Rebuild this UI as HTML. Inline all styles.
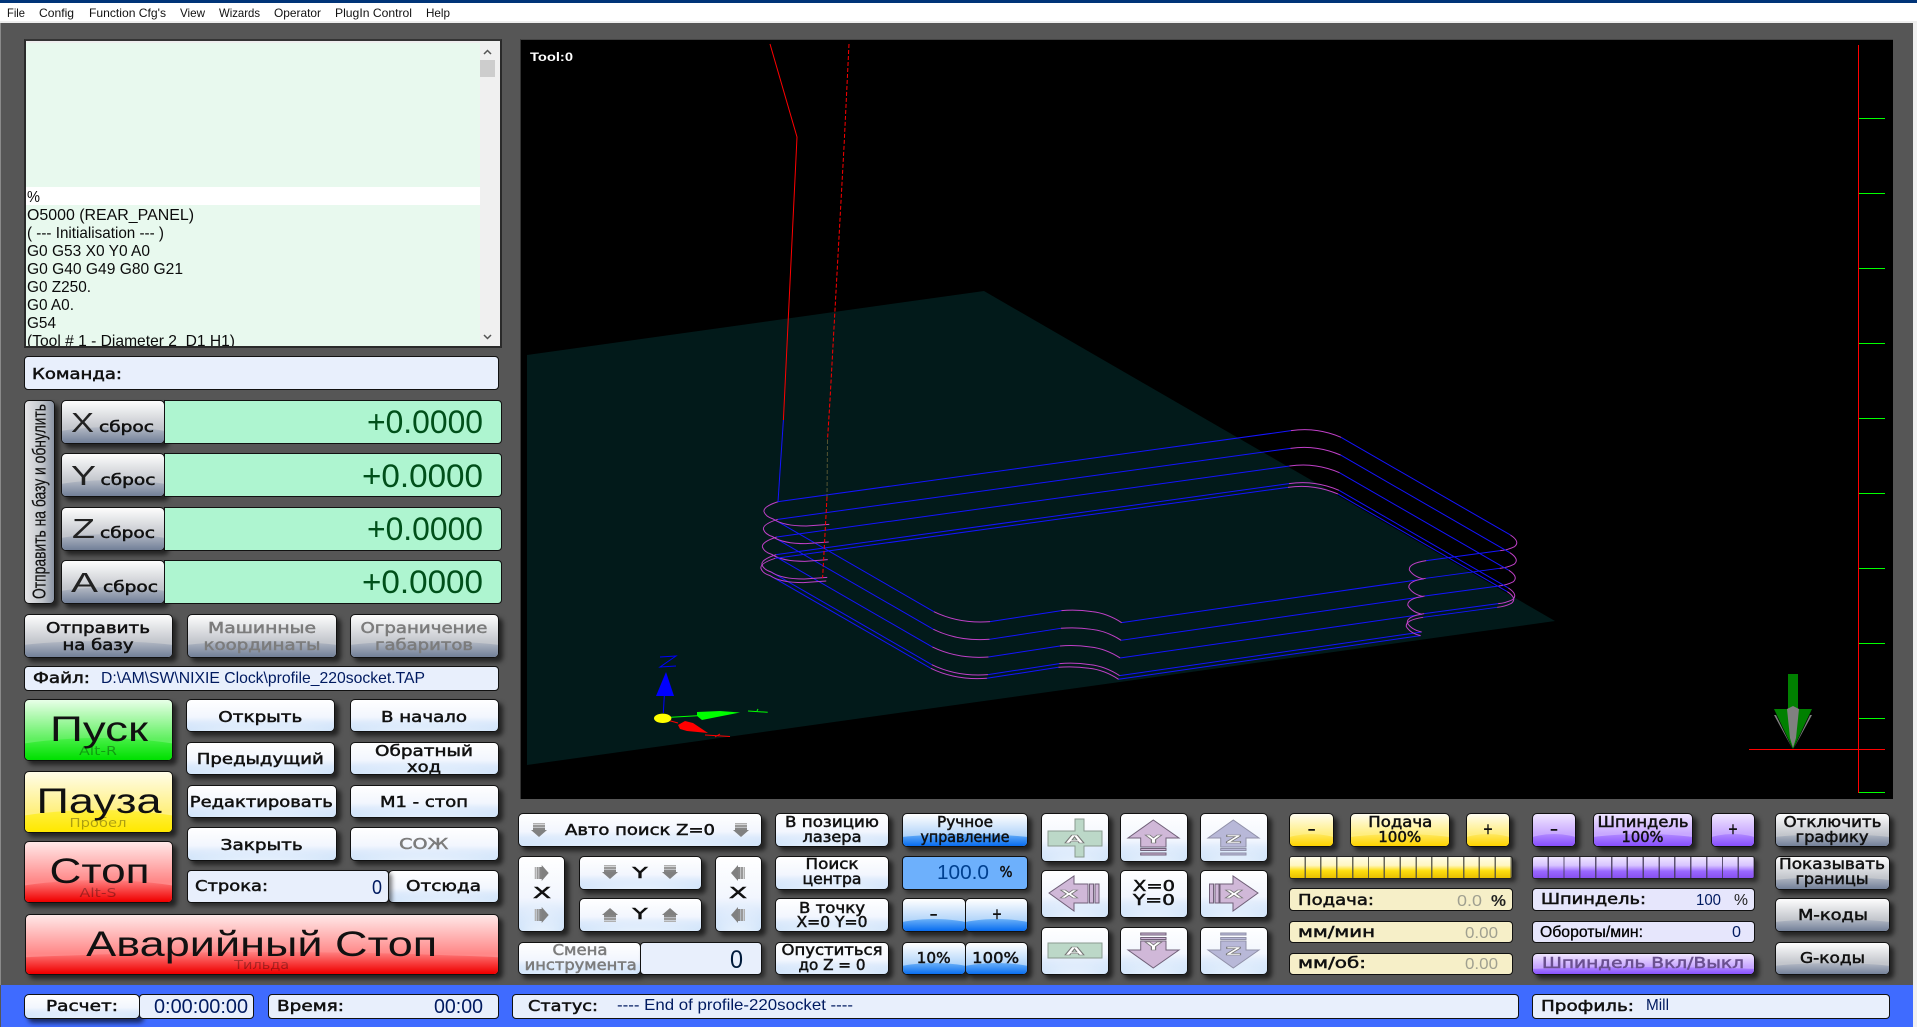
<!DOCTYPE html>
<html lang="ru"><head><meta charset="utf-8"><title>Mach3</title>
<style>
html,body{margin:0;padding:0;width:1917px;height:1027px;overflow:hidden;background:#565656}
div{position:absolute;box-sizing:border-box}
.b{border:1px solid #111;border-radius:5px;overflow:hidden;box-shadow:4px 4px 5px rgba(0,0,0,.6)}
.b::before{content:"";position:absolute;left:-45%;right:-45%;top:63%;height:120%;border-radius:50%;background:var(--h)}
.g{background:linear-gradient(#fdfdfd 0,#c4c7cd 63%,#b8bcc4);--h:linear-gradient(#b4bac5,#75829a 30%)}
.w{background:linear-gradient(#fff 0,#f2f6fe 55%,#bcd8f8);--h:radial-gradient(closest-side,#fff 0,rgba(255,255,255,0) 100%)}
.l{background:linear-gradient(#fff,#b8d8fa 62%,#7fbdf8);--h:linear-gradient(#6ab0f8,#0a6ef0 30%)}
.y{background:linear-gradient(#fffdf0,#ffee80 62%);--h:linear-gradient(#ffe860,#ffd400 30%)}
.p{background:linear-gradient(#f0e6ff,#c8a8ff 62%);--h:linear-gradient(#b088ff,#8850ff 30%)}
.gr{background:linear-gradient(#e8ffe8,#60f060 65%);--h:linear-gradient(#48f048,#00e000 30%)}
.ye{background:linear-gradient(#fffde8,#fff080 65%);--h:linear-gradient(#fff040,#ffe800 30%)}
.re{background:linear-gradient(#ffe8e8,#ff8888 65%);--h:linear-gradient(#ff8080,#f00000 30%)}
.vb{background:linear-gradient(90deg,#e6e6e8,#c0c4ca 60%,#8a94a4);--h:none}
.f{border:1px solid #111;border-radius:4px;background:#e8effc}
.bar{border:1px solid #222;border-radius:3px;box-shadow:3px 3px 4px rgba(0,0,0,.5)}
svg text{white-space:pre}
.e{font:400 15px "DejaVu Sans",sans-serif;fill:#111;stroke:#111;stroke-width:.5}
.d{fill:#7c7c7c;stroke:#7c7c7c}
.m{text-anchor:middle}
.t{font:16px "Liberation Sans",sans-serif;fill:#001a60}
.c{font:16px "Liberation Sans",sans-serif;fill:#0b0b0b}
.n{font:12px "Liberation Sans",sans-serif;fill:#111}
.v{font:20px "Liberation Sans",sans-serif;fill:#001a60}
.h{font:32px "Liberation Sans",sans-serif;fill:#00501a}
.big{font:35px "Liberation Sans",sans-serif;fill:#111}
.th{font:28px "Liberation Sans",sans-serif;fill:#222}
.s{font:400 12px "DejaVu Sans",sans-serif;fill:#000;opacity:.32}
.j{font:700 11px "DejaVu Sans",sans-serif;fill:#fff;stroke:#777;stroke-width:.6;text-anchor:middle}
</style></head><body>
<div style="left:0;top:0;width:1917px;height:3px;background:#003478"></div>
<div style="left:0;top:3px;width:1917px;height:20px;background:#fff;border-bottom:2px solid #eee"></div>
<div style="left:0;top:23px;width:1px;height:962px;background:#8a8a8a"></div>
<div style="left:1913px;top:23px;width:4px;height:1004px;background:#f0f0f0"></div>
<div style="left:1px;top:985px;width:1912px;height:42px;background:#3f6bff"></div>

<div style="left:24px;top:39px;width:478px;height:309px;background:#e8f9ee;border:2px solid #2a2a2a;border-top:2px solid #333"></div>
<div style="left:26px;top:41px;width:454px;height:2px;background:#eee"></div>
<div style="left:26px;top:187px;width:454px;height:18px;background:#fff"></div>
<div style="left:480px;top:41px;width:20px;height:305px;background:#f0f0f0"></div>
<div style="left:480px;top:60px;width:15px;height:17px;background:#cdcdcd"></div>
<div class="f" style="left:24px;top:356px;width:475px;height:34px"></div>

<div class="b vb" style="left:24px;top:400px;width:31px;height:204px"></div>
<div class="b g" style="left:61px;top:400px;width:104px;height:44px"></div>
<div class="b g" style="left:61px;top:453px;width:104px;height:44px"></div>
<div class="b g" style="left:61px;top:507px;width:104px;height:44px"></div>
<div class="b g" style="left:61px;top:560px;width:104px;height:44px"></div>
<div class="f" style="left:164px;top:400px;width:338px;height:44px;background:#aef5d0;border-radius:0 4px 4px 0"></div>
<div class="f" style="left:164px;top:453px;width:338px;height:44px;background:#aef5d0;border-radius:0 4px 4px 0"></div>
<div class="f" style="left:164px;top:507px;width:338px;height:44px;background:#aef5d0;border-radius:0 4px 4px 0"></div>
<div class="f" style="left:164px;top:560px;width:338px;height:44px;background:#aef5d0;border-radius:0 4px 4px 0"></div>

<div class="b g" style="left:24px;top:614px;width:149px;height:44px"></div>
<div class="b g" style="left:187px;top:614px;width:150px;height:44px"></div>
<div class="b g" style="left:350px;top:614px;width:149px;height:44px"></div>
<div class="f" style="left:24px;top:666px;width:475px;height:25px"></div>

<div class="b gr" style="left:24px;top:699px;width:149px;height:62px"></div>
<div class="b ye" style="left:24px;top:771px;width:149px;height:62px"></div>
<div class="b re" style="left:24px;top:841px;width:149px;height:62px"></div>
<div class="b re" style="left:25px;top:914px;width:474px;height:61px"></div>

<div class="b w" style="left:186px;top:699px;width:149px;height:33px"></div>
<div class="b w" style="left:350px;top:699px;width:149px;height:33px"></div>
<div class="b w" style="left:186px;top:742px;width:149px;height:33px"></div>
<div class="b w" style="left:350px;top:742px;width:149px;height:33px"></div>
<div class="b w" style="left:187px;top:785px;width:150px;height:33px"></div>
<div class="b w" style="left:350px;top:785px;width:149px;height:33px"></div>
<div class="b w" style="left:187px;top:827px;width:150px;height:34px"></div>
<div class="b w" style="left:350px;top:827px;width:149px;height:34px"></div>
<div class="b w" style="left:388px;top:870px;width:111px;height:33px"></div>
<div class="f" style="left:187px;top:870px;width:202px;height:33px;box-shadow:3px 3px 4px rgba(0,0,0,.5)"></div>

<div class="b w" style="left:24px;top:994px;width:116px;height:25px"></div>
<div class="f" style="left:139px;top:994px;width:115px;height:25px"></div>
<div class="f" style="left:268px;top:994px;width:231px;height:25px"></div>
<div class="f" style="left:512px;top:994px;width:1007px;height:25px"></div>
<div class="f" style="left:1532px;top:994px;width:358px;height:25px"></div>

<div style="left:520px;top:39px;width:1373px;height:760px;background:#000;border-left:1px solid #333;border-top:1px solid #444"></div>

<div class="b w" style="left:518px;top:813px;width:244px;height:34px"></div>
<div class="b w" style="left:518px;top:856px;width:47px;height:76px"></div>
<div class="b w" style="left:579px;top:856px;width:123px;height:34px"></div>
<div class="b w" style="left:579px;top:898px;width:123px;height:34px"></div>
<div class="b w" style="left:715px;top:856px;width:47px;height:76px"></div>
<div class="b w" style="left:518px;top:942px;width:123px;height:33px"></div>
<div class="f" style="left:640px;top:942px;width:122px;height:33px;box-shadow:3px 3px 4px rgba(0,0,0,.5)"></div>
<div class="b w" style="left:775px;top:813px;width:114px;height:34px"></div>
<div class="b w" style="left:775px;top:856px;width:114px;height:34px"></div>
<div class="b w" style="left:775px;top:898px;width:114px;height:34px"></div>
<div class="b w" style="left:775px;top:942px;width:114px;height:33px"></div>
<div class="b l" style="left:902px;top:813px;width:126px;height:34px"></div>
<div class="f" style="left:902px;top:856px;width:126px;height:34px;background:#6db0fc;box-shadow:3px 3px 4px rgba(0,0,0,.5)"></div>
<div class="b l" style="left:902px;top:898px;width:64px;height:34px"></div>
<div class="b l" style="left:965px;top:898px;width:63px;height:34px"></div>
<div class="b l" style="left:902px;top:942px;width:64px;height:33px"></div>
<div class="b l" style="left:965px;top:942px;width:63px;height:33px"></div>

<div class="b w" style="left:1041px;top:813px;width:68px;height:49px"></div>
<div class="b w" style="left:1120px;top:813px;width:68px;height:49px"></div>
<div class="b w" style="left:1200px;top:813px;width:68px;height:49px"></div>
<div class="b w" style="left:1041px;top:870px;width:68px;height:48px"></div>
<div class="b w" style="left:1120px;top:870px;width:68px;height:48px"></div>
<div class="b w" style="left:1200px;top:870px;width:68px;height:48px"></div>
<div class="b w" style="left:1041px;top:927px;width:68px;height:48px"></div>
<div class="b w" style="left:1120px;top:927px;width:68px;height:48px"></div>
<div class="b w" style="left:1200px;top:927px;width:68px;height:48px"></div>

<div class="b y" style="left:1289px;top:813px;width:45px;height:34px"></div>
<div class="b y" style="left:1350px;top:813px;width:100px;height:34px"></div>
<div class="b y" style="left:1466px;top:813px;width:44px;height:34px"></div>
<div class="bar" style="left:1289px;top:856px;width:224px;height:23px;background:repeating-linear-gradient(90deg,rgba(0,0,0,0) 0 14.4px,rgba(80,80,70,.85) 14.4px 15.85px),linear-gradient(#fffde8,#fff6c0 40%,#ffdf10 65%,#e8c000)"></div>
<div class="f" style="left:1289px;top:888px;width:224px;height:23px;background:#f6efc8"></div>
<div class="f" style="left:1289px;top:921px;width:224px;height:22px;background:#f6efc8"></div>
<div class="f" style="left:1289px;top:953px;width:224px;height:22px;background:#f6efc8"></div>

<div class="b p" style="left:1532px;top:813px;width:44px;height:34px"></div>
<div class="b p" style="left:1593px;top:813px;width:100px;height:34px"></div>
<div class="b p" style="left:1711px;top:813px;width:44px;height:34px"></div>
<div class="bar" style="left:1532px;top:856px;width:223px;height:23px;background:repeating-linear-gradient(90deg,rgba(0,0,0,0) 0 14.4px,rgba(70,60,90,.85) 14.4px 15.85px),linear-gradient(#efe6ff,#d8c4ff 40%,#9a68ff 68%,#8850f0)"></div>
<div class="f" style="left:1532px;top:888px;width:223px;height:23px;background:#e6e6fc"></div>
<div class="f" style="left:1532px;top:921px;width:223px;height:22px;background:#e6e6fc"></div>
<div class="b p" style="left:1532px;top:953px;width:223px;height:22px"></div>

<div class="b g" style="left:1775px;top:813px;width:115px;height:34px"></div>
<div class="b g" style="left:1775px;top:856px;width:115px;height:34px"></div>
<div class="b g" style="left:1775px;top:898px;width:115px;height:34px"></div>
<div class="b g" style="left:1775px;top:942px;width:115px;height:33px"></div>

<svg width="1917" height="1027" viewBox="0 0 1917 1027" style="position:absolute;left:0;top:0">
<defs>
<clipPath id="cg"><rect x="26" y="41" width="454" height="305"/></clipPath>
<clipPath id="cv"><rect x="521" y="40" width="1372" height="759"/></clipPath>
<g id="lay" fill="none" stroke-width="1">
<path stroke="#1414ff" vector-effect="non-scaling-stroke" d="M75,305L1080,92M1178,112L1510,405M1490,452L1345,482M1340,537L748,668M630,632L490,665M380,635L65,357"/>
<path stroke="#c040c8" vector-effect="non-scaling-stroke" d="M1080,92Q1108,86 1132,92Q1155,97 1178,112M1510,405Q1530,425 1518,440Q1505,450 1490,452M1345,482Q1310,490 1312,510Q1320,530 1340,537M748,668Q720,640 690,635Q660,628 630,632M490,665Q430,672 380,635M75,305Q45,320 47,335Q50,350 65,357Q85,378 130,378L175,373"/>
</g>
<g id="ad"><rect x="-6" y="-7" width="12" height="1.5" fill="#b0b0b0"/><rect x="-6" y="-5" width="12" height="2" fill="#999"/><rect x="-6" y="-2.500" width="12" height="3" fill="#858585"/><polygon points="-8,0 8,0 0,7" fill="#808080"/></g>
</defs>

<!-- 3D view -->
<g clip-path="url(#cv)">
<polygon points="527,355 984,291 1555,621 527,765" fill="#021a1a"/>
<g shape-rendering="crispEdges">
<line x1="1858.500" y1="45" x2="1858.500" y2="793" stroke="#f00"/>
<path d="M1859 118.500h26M1859 193.500h26M1859 268.500h26M1859 343.500h26M1859 418.500h26M1859 493.500h26M1859 568.500h26M1859 643.500h26M1859 718.500h26M1859 792.500h26" stroke="#0f0" fill="none"/>
<line x1="1749" y1="749.500" x2="1885" y2="749.500" stroke="#f00"/>
</g>
<rect x="1788" y="674" width="10" height="36" fill="#008000"/>
<polygon points="1774,709 1812,709 1793,749" fill="#008000"/>
<polygon points="1787,709 1793,706 1799,709 1796,738 1793,748 1790,738" fill="#808080"/>
<polygon points="1774,715 1776,715 1792,748" fill="#808080"/>
<polygon points="1812,715 1810,715 1794,748" fill="#808080"/>
<g transform="translate(740 400) scale(.5102 .3333)">
<use href="#lay"/>
<use href="#lay" y="53" x="-1"/>
<use href="#lay" y="106" x="-3"/>
<use href="#lay" y="159" x="-4"/>
<use href="#lay" y="170" x="-6"/>
</g>
<path d="M770,44L797,137L783.400,420" fill="none" stroke="#f00" stroke-width="1"/>
<path d="M783.400,420L778,502" fill="none" stroke="#1414ff" stroke-width="1"/>
<path d="M849,44L844,147L830,400L827.500,440" fill="none" stroke="#f00" stroke-width="1" stroke-dasharray="4 2"/>
<path d="M827.500,440L827,497" fill="none" stroke="#553" stroke-width="1" stroke-dasharray="4 2"/>
<path d="M827,497L822.600,578" fill="none" stroke="#f00" stroke-width="1" stroke-dasharray="4 2"/>
<path d="M660,657L676,656L660,667L676,666" fill="none" stroke="#00f"/>
<polygon points="666,672 656,696 674,696" fill="#00f"/>
<line x1="664.300" y1="696" x2="663.300" y2="713" stroke="#00f"/>
<line x1="671" y1="717.300" x2="697" y2="715.700" stroke="#0f0"/>
<polygon points="697,712 720,711 740,712.500 717,717 702,720 697,716" fill="#0f0"/>
<path d="M748,711L767.700,712.300M757,711L758,709" fill="none" stroke="#0f0"/>
<line x1="667" y1="720" x2="678" y2="723" stroke="#f00"/>
<polygon points="678,725 685,721 693,723 708,733 687,731 680,729" fill="#f00"/>
<path d="M705,735L730,736.500M720,734L715,737" fill="none" stroke="#f00"/>
<ellipse cx="662.700" cy="718.300" rx="8.700" ry="4.700" fill="#ff0"/>
</g>
<text x="530" y="61" style="font:700 12px 'Liberation Sans',sans-serif;fill:#fff" textLength="43" lengthAdjust="spacingAndGlyphs">Tool:0</text>

<!-- jog icons -->
<g stroke="#8a9a90" stroke-width="1">
<polygon fill="#bcd8c8" points="1075,819 1084,819 1084,831 1102,831 1102,846 1084,846 1084,857 1075,857 1075,846 1048,846 1048,831 1075,831"/>
<rect x="1048" y="943" width="54" height="15" fill="#bcd8c8"/>
</g>
<g fill="#d0b8d8" stroke="#706078" stroke-width="1">
<polygon points="1153.300,820 1179,838 1166,838 1166,847 1140.700,847 1140.700,838 1128,838"/>
<polygon points="1153.300,968 1179,950 1166,950 1166,941 1140.700,941 1140.700,950 1128,950"/>
<polygon points="1049,893 1074,876 1074,884 1088,884 1088,903 1074,903 1074,911"/>
<polygon points="1258,893 1233,876 1233,884 1220,884 1220,903 1233,903 1233,911"/>
<path d="M1140.700 848.500h25.300v2h-25.300zM1140.700 853h25.300v2h-25.300zM1140.700 933h25.300v2h-25.300zM1140.700 937.500h25.300v2h-25.300z"/>
<rect x="1089.500" y="884" width="4" height="19"/><rect x="1095" y="884" width="4" height="19"/>
<rect x="1215" y="884" width="4" height="19"/><rect x="1209.500" y="884" width="4" height="19"/>
</g>
<g fill="#b8b8d8" stroke="#9090a8" stroke-width="1">
<polygon points="1233.300,820 1259,838 1246,838 1246,847 1220.700,847 1220.700,838 1208,838"/>
<polygon points="1233.300,968 1259,950 1246,950 1246,941 1220.700,941 1220.700,950 1208,950"/>
<path d="M1220.700 848.500h25.300v2h-25.300zM1220.700 853h25.300v2h-25.300zM1220.700 933h25.300v2h-25.300zM1220.700 937.500h25.300v2h-25.300z"/>
</g>
<text class="j" x="1074.500" y="843" textLength="19" lengthAdjust="spacingAndGlyphs">A</text>
<text class="j" x="1074.500" y="955" textLength="19" lengthAdjust="spacingAndGlyphs">A</text>
<text class="j" x="1153.500" y="843" textLength="16" lengthAdjust="spacingAndGlyphs">Y</text>
<text class="j" x="1153.500" y="950" textLength="16" lengthAdjust="spacingAndGlyphs">Y</text>
<text class="j" x="1233.500" y="843" textLength="16" lengthAdjust="spacingAndGlyphs">Z</text>
<text class="j" x="1233.500" y="955" textLength="16" lengthAdjust="spacingAndGlyphs">Z</text>
<text class="j" x="1069" y="898" textLength="18" lengthAdjust="spacingAndGlyphs">X</text>
<text class="j" x="1234" y="898" textLength="18" lengthAdjust="spacingAndGlyphs">X</text>

<!-- small arrows -->
<use href="#ad" x="539" y="830"/><use href="#ad" x="741" y="830"/>
<use href="#ad" x="610" y="872"/><use href="#ad" x="670" y="872"/>
<g transform="translate(610 915) scale(1 -1)"><use href="#ad"/></g>
<g transform="translate(670 915) scale(1 -1)"><use href="#ad"/></g>
<g transform="translate(541.700 873) rotate(-90)"><use href="#ad"/></g>
<g transform="translate(541.700 915) rotate(-90)"><use href="#ad"/></g>
<g transform="translate(738 873) rotate(90)"><use href="#ad"/></g>
<g transform="translate(738 915) rotate(90)"><use href="#ad"/></g>

<path d="M484 54l3.500-3.500 3.500 3.500M484 335l3.500 3.500 3.500-3.500" fill="none" stroke="#555" stroke-width="1.500"/>

<!-- menu -->
<text class="n" x="7" y="17" textLength="18" lengthAdjust="spacingAndGlyphs">File</text>
<text class="n" x="39" y="17" textLength="35" lengthAdjust="spacingAndGlyphs">Config</text>
<text class="n" x="89" y="17" textLength="77" lengthAdjust="spacingAndGlyphs">Function Cfg's</text>
<text class="n" x="180" y="17" textLength="25" lengthAdjust="spacingAndGlyphs">View</text>
<text class="n" x="219" y="17" textLength="41" lengthAdjust="spacingAndGlyphs">Wizards</text>
<text class="n" x="274" y="17" textLength="47" lengthAdjust="spacingAndGlyphs">Operator</text>
<text class="n" x="335" y="17" textLength="77" lengthAdjust="spacingAndGlyphs">PlugIn Control</text>
<text class="n" x="426" y="17" textLength="24" lengthAdjust="spacingAndGlyphs">Help</text>

<!-- gcode -->
<g clip-path="url(#cg)">
<text class="c" x="27" y="202" textLength="13" lengthAdjust="spacingAndGlyphs">%</text>
<text class="c" x="27" y="220" textLength="167" lengthAdjust="spacingAndGlyphs">O5000 (REAR_PANEL)</text>
<text class="c" x="27" y="238" textLength="137" lengthAdjust="spacingAndGlyphs">( --- Initialisation --- )</text>
<text class="c" x="27" y="256" textLength="123" lengthAdjust="spacingAndGlyphs">G0 G53 X0 Y0 A0</text>
<text class="c" x="27" y="274" textLength="156" lengthAdjust="spacingAndGlyphs">G0 G40 G49 G80 G21</text>
<text class="c" x="27" y="292" textLength="64" lengthAdjust="spacingAndGlyphs">G0 Z250.</text>
<text class="c" x="27" y="310" textLength="47" lengthAdjust="spacingAndGlyphs">G0 A0.</text>
<text class="c" x="27" y="328" textLength="29" lengthAdjust="spacingAndGlyphs">G54</text>
<text class="c" x="27" y="346" textLength="208" lengthAdjust="spacingAndGlyphs">(Tool # 1 - Diameter 2  D1 H1)</text>
</g>

<text class="e" x="32" y="379" textLength="90" lengthAdjust="spacingAndGlyphs">Команда:</text>

<text transform="translate(45.500 599) rotate(-90)" style="font:18px 'Liberation Sans',sans-serif;fill:#111;stroke:#111;stroke-width:.2" textLength="195" lengthAdjust="spacingAndGlyphs">Отправить на базу и обнулить</text>

<text class="th" x="71" y="432" textLength="23" lengthAdjust="spacingAndGlyphs">X</text>
<text class="e" x="99" y="432" textLength="55" lengthAdjust="spacingAndGlyphs">сброс</text>
<text class="th" x="71" y="485" textLength="25" lengthAdjust="spacingAndGlyphs">Y</text>
<text class="e" x="100.500" y="485" textLength="55" lengthAdjust="spacingAndGlyphs">сброс</text>
<text class="th" x="72" y="538" textLength="23" lengthAdjust="spacingAndGlyphs">Z</text>
<text class="e" x="100" y="538" textLength="55" lengthAdjust="spacingAndGlyphs">сброс</text>
<text class="th" x="71" y="592" textLength="27" lengthAdjust="spacingAndGlyphs">A</text>
<text class="e" x="103" y="592" textLength="55" lengthAdjust="spacingAndGlyphs">сброс</text>

<text class="h" x="367" y="433" textLength="116" lengthAdjust="spacingAndGlyphs">+0.0000</text>
<text class="h" x="362" y="487" textLength="121" lengthAdjust="spacingAndGlyphs">+0.0000</text>
<text class="h" x="367" y="540" textLength="116" lengthAdjust="spacingAndGlyphs">+0.0000</text>
<text class="h" x="362" y="593" textLength="121" lengthAdjust="spacingAndGlyphs">+0.0000</text>

<text class="e m" x="98" y="633" textLength="104" lengthAdjust="spacingAndGlyphs">Отправить</text>
<text class="e m" x="98" y="650" textLength="71" lengthAdjust="spacingAndGlyphs">на базу</text>
<text class="e m d" x="262" y="633" textLength="108" lengthAdjust="spacingAndGlyphs">Машинные</text>
<text class="e m d" x="262" y="650" textLength="117" lengthAdjust="spacingAndGlyphs">координаты</text>
<text class="e m d" x="424" y="633" textLength="127" lengthAdjust="spacingAndGlyphs">Ограничение</text>
<text class="e m d" x="424" y="650" textLength="98" lengthAdjust="spacingAndGlyphs">габаритов</text>

<text class="e" x="33" y="683" textLength="57" lengthAdjust="spacingAndGlyphs">Файл:</text>
<text class="t" x="101" y="683" textLength="324" lengthAdjust="spacingAndGlyphs">D:\AM\SW\NIXIE Clock\profile_220socket.TAP</text>

<text class="big m" x="99" y="741" textLength="98" lengthAdjust="spacingAndGlyphs">Пуск</text>
<text class="s m" x="98" y="755" textLength="38" lengthAdjust="spacingAndGlyphs">Alt-R</text>
<text class="big m" x="99" y="813" textLength="125" lengthAdjust="spacingAndGlyphs">Пауза</text>
<text class="s m" x="98" y="827" textLength="57" lengthAdjust="spacingAndGlyphs">Пробел</text>
<text class="big m" x="99.500" y="883" textLength="100" lengthAdjust="spacingAndGlyphs">Стоп</text>
<text class="s m" x="98" y="897" textLength="37" lengthAdjust="spacingAndGlyphs">Alt-S</text>
<text class="big m" x="261.700" y="956" textLength="351" lengthAdjust="spacingAndGlyphs">Аварийный Стоп</text>
<text class="s m" x="261.700" y="969" textLength="55" lengthAdjust="spacingAndGlyphs">Тильда</text>

<text class="e m" x="260.300" y="722" textLength="84" lengthAdjust="spacingAndGlyphs">Открыть</text>
<text class="e m" x="424" y="722" textLength="86" lengthAdjust="spacingAndGlyphs">В начало</text>
<text class="e m" x="260.300" y="764" textLength="127" lengthAdjust="spacingAndGlyphs">Предыдущий</text>
<text class="e m" x="424" y="756" textLength="98" lengthAdjust="spacingAndGlyphs">Обратный</text>
<text class="e m" x="424" y="772" textLength="34" lengthAdjust="spacingAndGlyphs">ход</text>
<text class="e m" x="261.300" y="807" textLength="143" lengthAdjust="spacingAndGlyphs">Редактировать</text>
<text class="e m" x="424" y="807" textLength="88" lengthAdjust="spacingAndGlyphs">M1 - стоп</text>
<text class="e m" x="261.700" y="850" textLength="82" lengthAdjust="spacingAndGlyphs">Закрыть</text>
<text class="e m d" x="423.700" y="849" textLength="49" lengthAdjust="spacingAndGlyphs">СОЖ</text>
<text class="e" x="195" y="891" textLength="73" lengthAdjust="spacingAndGlyphs">Строка:</text>
<text class="v" x="372" y="894" textLength="10" lengthAdjust="spacingAndGlyphs">0</text>
<text class="e m" x="443.500" y="891" textLength="75" lengthAdjust="spacingAndGlyphs">Отсюда</text>

<text class="e m" x="82" y="1011" textLength="72" lengthAdjust="spacingAndGlyphs">Расчет:</text>
<text class="v" x="154" y="1013" textLength="94" lengthAdjust="spacingAndGlyphs">0:00:00:00</text>
<text class="e" x="277" y="1011" textLength="67" lengthAdjust="spacingAndGlyphs">Время:</text>
<text class="v" x="434" y="1013" textLength="49" lengthAdjust="spacingAndGlyphs">00:00</text>
<text class="e" x="528" y="1011" textLength="70" lengthAdjust="spacingAndGlyphs">Статус:</text>
<text class="t" x="617" y="1010" textLength="236" lengthAdjust="spacingAndGlyphs">---- End of profile-220socket ----</text>
<text class="e" x="1541" y="1011" textLength="93" lengthAdjust="spacingAndGlyphs">Профиль:</text>
<text class="t" x="1646" y="1010" textLength="23" lengthAdjust="spacingAndGlyphs">Mill</text>

<text class="e m" x="640" y="835" textLength="150" lengthAdjust="spacingAndGlyphs">Авто поиск Z=0</text>
<text class="e m" x="640" y="878" textLength="15" lengthAdjust="spacingAndGlyphs">Y</text>
<text class="e m" x="640" y="919" textLength="15" lengthAdjust="spacingAndGlyphs">Y</text>
<text class="e m" x="542" y="898" textLength="18" lengthAdjust="spacingAndGlyphs">X</text>
<text class="e m" x="738" y="898" textLength="18" lengthAdjust="spacingAndGlyphs">X</text>
<text class="e m" x="832" y="827" textLength="94" lengthAdjust="spacingAndGlyphs">В позицию</text>
<text class="e m" x="832" y="842" textLength="59" lengthAdjust="spacingAndGlyphs">лазера</text>
<text class="e m" x="965" y="827" textLength="56" lengthAdjust="spacingAndGlyphs">Ручное</text>
<text class="e m" x="965" y="842" textLength="89" lengthAdjust="spacingAndGlyphs">управление</text>
<text class="e m" x="832" y="869" textLength="53" lengthAdjust="spacingAndGlyphs">Поиск</text>
<text class="e m" x="832" y="884" textLength="59" lengthAdjust="spacingAndGlyphs">центра</text>
<text class="v" x="937" y="879" textLength="52" lengthAdjust="spacingAndGlyphs" style="fill:#004090">100.0</text>
<text class="e m" x="1006" y="877" textLength="13" lengthAdjust="spacingAndGlyphs">%</text>
<text class="e m" x="832" y="913" textLength="66" lengthAdjust="spacingAndGlyphs">В точку</text>
<text class="e m" x="832" y="927" textLength="71" lengthAdjust="spacingAndGlyphs">X=0 Y=0</text>
<text class="e m" x="933.700" y="919" textLength="8" lengthAdjust="spacingAndGlyphs">-</text>
<text class="e m" x="997" y="919" textLength="10" lengthAdjust="spacingAndGlyphs">+</text>
<text class="e m d" x="580" y="955" textLength="55" lengthAdjust="spacingAndGlyphs">Смена</text>
<text class="e m d" x="580.700" y="970" textLength="112" lengthAdjust="spacingAndGlyphs">инструмента</text>
<text class="v" x="730" y="968" textLength="13" lengthAdjust="spacingAndGlyphs" style="font-size:25px;fill:#001a3a">0</text>
<text class="e m" x="832" y="955" textLength="101" lengthAdjust="spacingAndGlyphs">Опуститься</text>
<text class="e m" x="832" y="970" textLength="67" lengthAdjust="spacingAndGlyphs">до Z = 0</text>
<text class="e m" x="933.700" y="963" textLength="34" lengthAdjust="spacingAndGlyphs">10%</text>
<text class="e m" x="995.700" y="963" textLength="47" lengthAdjust="spacingAndGlyphs">100%</text>

<text class="e m" x="1154" y="891" textLength="42" lengthAdjust="spacingAndGlyphs">X=0</text>
<text class="e m" x="1154" y="905" textLength="42" lengthAdjust="spacingAndGlyphs">Y=0</text>

<text class="e m" x="1311.700" y="834" textLength="8" lengthAdjust="spacingAndGlyphs">-</text>
<text class="e m" x="1400.300" y="827" textLength="64" lengthAdjust="spacingAndGlyphs">Подача</text>
<text class="e m" x="1399.700" y="842" textLength="43" lengthAdjust="spacingAndGlyphs">100%</text>
<text class="e m" x="1488" y="834" textLength="10" lengthAdjust="spacingAndGlyphs">+</text>
<text class="e" x="1298" y="905" textLength="76" lengthAdjust="spacingAndGlyphs">Подача:</text>
<text class="t" x="1457" y="906" textLength="25" lengthAdjust="spacingAndGlyphs" style="fill:#a0a090">0.0</text>
<text class="t" x="1491" y="906" textLength="15" lengthAdjust="spacingAndGlyphs" style="fill:#222;font-weight:700">%</text>
<text class="e" x="1298" y="937" textLength="77" lengthAdjust="spacingAndGlyphs">мм/мин</text>
<text class="t" x="1465" y="938" textLength="33" lengthAdjust="spacingAndGlyphs" style="fill:#a0a090">0.00</text>
<text class="e" x="1298" y="968" textLength="68" lengthAdjust="spacingAndGlyphs">мм/об:</text>
<text class="t" x="1465" y="969" textLength="33" lengthAdjust="spacingAndGlyphs" style="fill:#a0a090">0.00</text>

<text class="e m" x="1554" y="834" textLength="8" lengthAdjust="spacingAndGlyphs">-</text>
<text class="e m" x="1643" y="827" textLength="91" lengthAdjust="spacingAndGlyphs">Шпиндель</text>
<text class="e m" x="1642.500" y="842" textLength="42" lengthAdjust="spacingAndGlyphs">100%</text>
<text class="e m" x="1733" y="834" textLength="10" lengthAdjust="spacingAndGlyphs">+</text>
<text class="e" x="1541" y="904" textLength="105" lengthAdjust="spacingAndGlyphs">Шпиндель:</text>
<text class="t" x="1696" y="905" textLength="25" lengthAdjust="spacingAndGlyphs">100</text>
<text class="t" x="1734" y="905" textLength="14" lengthAdjust="spacingAndGlyphs" style="fill:#222">%</text>
<text class="c" x="1540" y="937" textLength="103" lengthAdjust="spacingAndGlyphs" style="fill:#000;stroke:#000;stroke-width:.3">Обороты/мин:</text>
<text class="t" x="1732" y="937" textLength="9" lengthAdjust="spacingAndGlyphs">0</text>
<text class="e m" x="1643" y="968" textLength="202" lengthAdjust="spacingAndGlyphs" style="fill:#6a5090;stroke:#6a5090">Шпиндель Вкл/Выкл</text>

<text class="e m" x="1832.500" y="827" textLength="98" lengthAdjust="spacingAndGlyphs">Отключить</text>
<text class="e m" x="1832" y="842" textLength="73" lengthAdjust="spacingAndGlyphs">графику</text>
<text class="e m" x="1832" y="869" textLength="106" lengthAdjust="spacingAndGlyphs">Показывать</text>
<text class="e m" x="1832" y="884" textLength="73" lengthAdjust="spacingAndGlyphs">границы</text>
<text class="e m" x="1833" y="920" textLength="70" lengthAdjust="spacingAndGlyphs">M-коды</text>
<text class="e m" x="1832.500" y="963" textLength="65" lengthAdjust="spacingAndGlyphs">G-коды</text>
</svg>
</body></html>
